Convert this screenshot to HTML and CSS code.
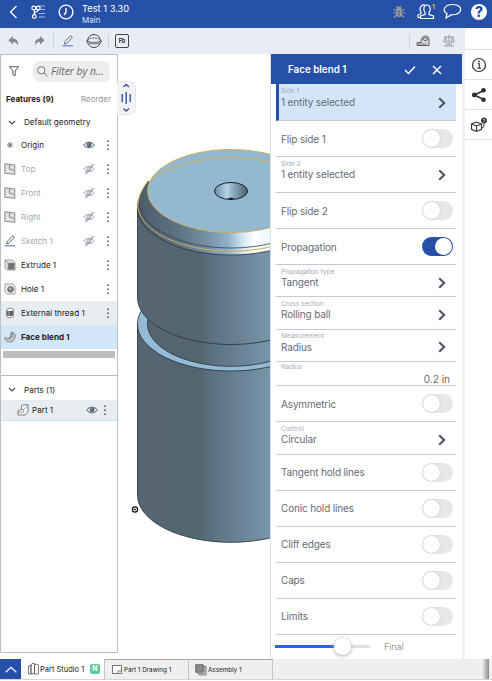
FILE: index.html
```html
<!DOCTYPE html>
<html lang="en">
<head>
<meta charset="utf-8">
<title>Test 1 3.30</title>
<link rel="stylesheet" href="styles.css">
</head>
<body>
<svg class="defs" width="0" height="0" aria-hidden="true">
  <symbol id="hidden-eye" viewBox="0 0 12 12"><path d="M.8 6C3 2.500 9 2.500 11.200 6 9 9.500 3 9.500.8 6zM2.200 11 9.800 1M3.400 11 11 1M4 6a2 2 0 0 1 4 0 2 2 0 0 1-4 0" fill="none" stroke="#8a96a5" stroke-width=".8"/></symbol>
  <symbol id="eye" viewBox="0 0 12 12"><path d="M.7 6C3 2.300 9 2.300 11.300 6 9 9.700 3 9.700.7 6z" fill="#e8ebef" stroke="#566274" stroke-width="1"/><circle cx="6" cy="5.700" r="2.400" fill="#4b586a"/><circle cx="5.200" cy="4.900" r=".7" fill="#fff"/></symbol>
  <symbol id="dots" viewBox="0 0 4 12"><path d="M1.200 1.500h1.500v1.500H1.200zM1.200 5.500h1.500v1.500H1.200zM1.200 9.500h1.500v1.500H1.200z" fill="#3d4958"/></symbol>
  <symbol id="plane" viewBox="0 0 12 12"><path d="M.8.8 10.800 2v9.300L.8 10.200z" fill="#e2e2e2" stroke="#808080" stroke-width=".9"/><path d="M5.500 1.500v5l5 .6" fill="none" stroke="#808080" stroke-width=".9"/></symbol>
  <symbol id="down" viewBox="0 0 8 5"><path d="m.8.8 3.200 3.200L7.200.8" fill="none" stroke="#444" stroke-width="1.100"/></symbol>
  <symbol id="next" viewBox="0 0 8 12"><path d="m1.200 1.200 5 4.800-5 4.800" fill="none" stroke="#4b5160" stroke-width="2"/></symbol>
  <symbol id="pencil" viewBox="0 0 12 12"><path d="m2.500 9 .6-2.500L8.700.8l1.700 1.400-5.500 6z" fill="#fff" stroke="#555" stroke-width=".9"/><path d="M.5 10.800h10.500" stroke="#4470c8"/></symbol>
</svg>

<header class="topbar">
  <svg class="i-back" width="9" height="14" viewBox="0 0 9 14"><path d="M7.500 1 1.500 7l6 6" fill="none" stroke="#fff" stroke-width="1.300"/></svg>
  <svg class="i-tree" width="15" height="14" viewBox="0 0 15 14" fill="none" stroke="#fff" stroke-width="1.200"><path d="M8 1h6M9.500 4.500H14M7.500 8.500H14M7.500 12H14" opacity=".6"/><circle cx="2.800" cy="3" r="1.900"/><circle cx="7.200" cy="3" r="1.900"/><circle cx="3.300" cy="11.500" r="1.800"/><path d="M3.300 9.700V5M7.200 5c0 2-3.900 1.500-3.900 4"/></svg>
  <svg class="i-clock" width="16" height="16" viewBox="0 0 16 16" fill="none" stroke="#fff" stroke-width="1.400"><circle cx="8" cy="8" r="6.900"/><path d="M8 4v4.500L6 11"/></svg>
  <div class="title"><div class="doc">Test 1 3.30</div><div class="branch">Main</div></div>
  <svg class="i-bug" width="14" height="14" viewBox="0 0 14 14"><path d="M4.500 4a2.500 2.500 0 0 1 5 0v6c0 3-5 3-5 0z" fill="#9b9b9b"/><path d="M1.500 4.500 5 6M12.500 4.500 9 6M1 8h12M2 12.500l3-3M12 12.500l-3-3M4.500 1 6 3M9.500 1 8 3" stroke="#9b9b9b" stroke-width="1.200"/><path d="M7 5v6.500" stroke="#264fa8" stroke-width=".8"/></svg>
  <svg class="i-people" width="19" height="17" viewBox="0 0 19 17" fill="none" stroke="#fff" stroke-width="1.200"><path d="M5 2.500c1-1.200 3-.6 3.500.5M4 9c-1.500-2-1.500-5 1-6.500M4 9v1.500L1 12v2.500h3"/><path d="M8 10C5.500 6.500 7 2 10 2s4.500 4.500 2 8v1.500l4.500 1.500v2.500h-13V13L8 11.500z" fill="#264fa8"/><text x="15" y="6" class="badge">1</text></svg>
  <svg class="i-chat" width="19" height="17" viewBox="0 0 19 17"><path d="M10 1.500c11 0 10 11-1.500 10.200L3 15l1-4.300C-2 7 2 1.500 10 1.500z" fill="none" stroke="#fff" stroke-width="1.200"/></svg>
  <span class="help">?</span>
</header>

<div class="workspace">
  <main class="stage">
    <div class="toolbar">
      <svg class="t-undo" width="11" height="10" viewBox="0 0 11 10"><path d="M5 0v2.500c4 0 5.500 3 5 7C9 7 7.500 6 5 6v2.500L.3 4.200z" fill="#858a92"/></svg>
      <svg class="t-redo" width="11" height="10" viewBox="0 0 11 10"><path d="M6 0v2.500C2 2.500.5 5.500 1 9.500 2 7 3.500 6 6 6v2.500l4.700-4.300z" fill="#858a92"/></svg>
      <i class="rule"></i>
      <svg class="t-pen" width="12" height="12"><use href="#pencil"/></svg>
      <svg class="t-ball" width="16" height="16" viewBox="0 0 16 16" fill="none" stroke="#444"><circle cx="8" cy="8" r="6.500"/><path d="M.8 7.500v1.500c3 2.500 11.400 2.500 14.400 0V7.500c-3 2.500-11.400 2.500-14.400 0z" fill="#e8ecf5" stroke-width=".8"/><path d="M2 6.500c3-2 9-2 12 0" stroke-dasharray="1.500 1"/></svg>
      <i class="rule two"></i>
      <span class="fb">Fb</span>
      <i class="rule three"></i>
      <svg class="t-tape" width="14" height="12" viewBox="0 0 14 12"><path d="M5 6.500 5.500 4c1-4 7.500-4 7.500 0v6.500H1v-3h4z" fill="#d8d8d8" stroke="#555" stroke-width=".9"/><ellipse cx="9.300" cy="4" rx="2.300" ry="1.500" fill="none" stroke="#555" stroke-width=".9"/><path d="M3 8v2M5 8v2M7 8v2M9 8v2" stroke="#555" stroke-width=".7"/></svg>
      <svg class="t-scale" width="12" height="12" viewBox="0 0 12 12" fill="none" stroke="#8b8e94" stroke-width=".9"><path d="M6 0v9M1 2h10M2.500 2 .8 7h3.400zM9.500 2 7.800 7h3.400zM1 11h10M3 9h6"/></svg>
    </div>

    <div class="canvas">
      <svg class="model" width="153" height="605" viewBox="118 54 153 605">
        <defs>
          <linearGradient id="side" gradientUnits="userSpaceOnUse" x1="137" y1="0" x2="271" y2="0"><stop offset="0" stop-color="#556672"/><stop offset=".46" stop-color="#536570"/><stop offset=".6" stop-color="#5f7585"/><stop offset=".8" stop-color="#6c8499"/><stop offset=".88" stop-color="#718ca1"/><stop offset="1" stop-color="#7896ab"/></linearGradient>
          <linearGradient id="bevel" gradientUnits="userSpaceOnUse" x1="137" y1="0" x2="271" y2="0"><stop offset="0" stop-color="#4c5d69"/><stop offset=".3" stop-color="#5d7180"/><stop offset=".52" stop-color="#7590a4"/><stop offset=".68" stop-color="#8fb1ca"/><stop offset=".8" stop-color="#d9ebf6"/><stop offset=".88" stop-color="#fff"/><stop offset="1" stop-color="#eaf6fc"/></linearGradient>
          <linearGradient id="cone"><stop offset="0" stop-color="#6f8da4"/><stop offset=".38" stop-color="#b5d3e8"/><stop offset=".52" stop-color="#94b5cc"/><stop offset="1" stop-color="#4c606e"/></linearGradient>
        </defs>
        <g stroke="#2a363e" stroke-width=".85">
          <path d="M137.500 324V495A93.500 47.300 0 0 0 324.500 495V324" fill="url(#side)"/>
          <ellipse cx="231" cy="324" rx="93.500" ry="47" fill="#95bad5"/>
          <ellipse cx="231" cy="324" rx="83.500" ry="42.300" fill="url(#side)"/>
          <path d="M137.500 208V297.500A93.500 47 0 0 0 324.500 297.500V208" fill="url(#side)"/>
          <path d="M137.500 208A93.500 47 0 0 0 324.500 208L320 195 148 182Q137.500 195 137.500 208" fill="url(#bevel)"/>
        </g>
        <path d="M148 182Q139 194 139 202A92 46 0 0 0 323 202" fill="none" stroke="#32424e" stroke-width=".8"/>
        <path d="M148.500 180Q137.800 195 137.800 206A93.300 46.700 0 0 0 324.300 206" fill="none" stroke="#cdae58" stroke-width="1"/>
        <ellipse cx="231" cy="191" rx="83.300" ry="41.600" fill="#95b8d1" stroke="#cdb05d" stroke-width="1"/>
        <path d="M149 182A93.500 47 0 0 1 313 182" fill="none" stroke="#cdb05d" stroke-width="1"/>
        <ellipse cx="231" cy="191" rx="16.500" ry="8.500" fill="url(#cone)" stroke="#17212a"/>
        <path d="M227.500 199q3.500-2.500 7 0z" fill="#111"/>
        <g fill="none" stroke="#111"><circle cx="135" cy="509.500" r="2.600" fill="#fff" stroke-width="1.200"/><circle cx="135" cy="509.500" r=".7" fill="#111" stroke-width=".6"/></g>
      </svg>

      <aside class="tree">
        <div class="filter">
          <svg width="10" height="11" viewBox="0 0 10 11"><path d="M.5.7h9L6.200 5v4.700L3.800 8.500V5z" fill="none" stroke="#444" stroke-width=".9"/></svg>
          <div class="search"><svg width="11" height="11" viewBox="0 0 11 11" fill="none" stroke="#666" stroke-width=".9"><circle cx="4.300" cy="4.300" r="3.700"/><path d="m7 7 3.500 3.500"/></svg><span>Filter by n...</span></div>
        </div>
        <div class="heading"><b>Features (9)</b><span>Reorder</span></div>
        <div class="group"><svg width="8" height="5"><use href="#down"/></svg><span>Default geometry</span></div>
        <div class="item"><svg class="glyph" viewBox="0 0 12 12"><circle cx="6" cy="6" r="2.200" fill="#fff" stroke="#555" stroke-width=".8"/><circle cx="6" cy="6" r=".9" fill="#333"/></svg><span>Origin</span><svg class="vis"><use href="#eye"/></svg><svg class="more"><use href="#dots"/></svg></div>
        <div class="item off"><svg class="glyph"><use href="#plane"/></svg><span>Top</span><svg class="vis"><use href="#hidden-eye"/></svg><svg class="more"><use href="#dots"/></svg></div>
        <div class="item off"><svg class="glyph"><use href="#plane"/></svg><span>Front</span><svg class="vis"><use href="#hidden-eye"/></svg><svg class="more"><use href="#dots"/></svg></div>
        <div class="item off"><svg class="glyph"><use href="#plane"/></svg><span>Right</span><svg class="vis"><use href="#hidden-eye"/></svg><svg class="more"><use href="#dots"/></svg></div>
        <div class="item off"><svg class="glyph"><use href="#pencil"/></svg><span>Sketch 1</span><svg class="vis"><use href="#hidden-eye"/></svg><svg class="more"><use href="#dots"/></svg></div>
        <div class="item"><svg class="glyph" viewBox="0 0 12 12"><path d="M1 1h7.500l2.500 2.500v7.500H3.500L1 9z" fill="#e8e8e8" stroke="#888" stroke-width=".8"/><path d="M4 4h6.500v6.500H4z" fill="#707070" stroke="#999" stroke-width=".8"/><path d="M1 1l3 3" stroke="#888" stroke-width=".8"/></svg><span>Extrude 1</span><svg class="more"><use href="#dots"/></svg></div>
        <div class="item"><svg class="glyph" viewBox="0 0 12 12"><path d="M1 1h8l2 2v8H3L1 9z" fill="#f2f2f2" stroke="#888" stroke-width=".8"/><circle cx="6.500" cy="6.300" r="2.900" fill="#858585" stroke="#555" stroke-width=".7"/><circle cx="6" cy="5.500" r="1" fill="#ccc"/></svg><span>Hole 1</span><svg class="more"><use href="#dots"/></svg></div>
        <div class="item hover"><svg class="glyph" viewBox="0 0 12 12"><path d="M2.500 2.300v7.400c1 1.500 6 1.500 7 0V2.300c-1-1.500-6-1.500-7 0z" fill="#fff" stroke="#777" stroke-width=".8"/><path d="M3 3.500c1.500.8 4.500.8 6 0v5c-1.500.8-4.500.8-6 0z" fill="#606060"/><path d="M5 4v4.800" stroke="#aaa"/></svg><span>External thread 1</span><svg class="more"><use href="#dots"/></svg></div>
        <div class="item active"><svg class="glyph" viewBox="0 0 12 12"><path d="M.7 6.800 4.500 7.500C7 6 6.500 3 7.500 1L11 3c.8 4.500-1.500 8-5.500 8-2 0-4-1-4.800-4.200z" fill="#c4c4c4" stroke="#777" stroke-width=".8"/><path d="M7.500 1c1.500 3 1 6-3 6.500" fill="none" stroke="#666" stroke-width=".8"/></svg><span>Face blend 1</span></div>
        <div class="rollback"></div>
        <div class="parts">
          <div class="group"><svg width="8" height="5"><use href="#down"/></svg><span>Parts (1)</span></div>
          <div class="item part"><svg class="glyph" viewBox="0 0 12 12"><path d="M4.500 1.500 6.500.7H11v7L8.500 11H1V6.500l3.500-1z" fill="#f3f3f3" stroke="#777" stroke-width=".9"/><path d="M4.500 5.500H6.500l2-2 2.500-2.500M6.500 5.500V8L1 8.500" fill="none" stroke="#888" stroke-width=".7"/></svg><span>Part 1</span><svg class="vis"><use href="#eye"/></svg><svg class="more"><use href="#dots"/></svg></div>
        </div>
      </aside>
      <div class="handle"><svg width="18" height="34" viewBox="0 0 18 34" fill="none" stroke="#2b56b4" stroke-width="1.400"><path d="m6.500 6 2.700-2.500L12 6M6.500 27.500l2.700 2.500 2.800-2.500M9.200 11v12M5.200 13v8M13.200 13v8"/></svg></div>

      <section class="dialog">
        <div class="dialog-head"><b>Face blend 1</b>
          <svg width="12" height="10" viewBox="0 0 12 10"><path d="m1 5 3.500 3.500L11 1.500" fill="none" stroke="#fff" stroke-width="1.500"/></svg>
          <svg width="10" height="10" viewBox="0 0 10 10"><path d="m1 1 8 8M9 1 1 9" stroke="#fff" stroke-width="1.500"/></svg>
        </div>
        <div class="fields">
          <div class="row pick selected"><small>Side 1</small><span>1 entity selected</span><svg class="next"><use href="#next"/></svg></div>
          <div class="row"><span>Flip side 1</span><i class="switch"></i></div>
          <div class="row pick"><small>Side 2</small><span>1 entity selected</span><svg class="next"><use href="#next"/></svg></div>
          <div class="row"><span>Flip side 2</span><i class="switch"></i></div>
          <div class="row"><span>Propagation</span><i class="switch on"></i></div>
          <div class="row pick short"><small>Propagation type</small><span>Tangent</span><svg class="next"><use href="#next"/></svg></div>
          <div class="row pick short"><small>Cross section</small><span>Rolling ball</span><svg class="next"><use href="#next"/></svg></div>
          <div class="row pick short"><small>Measurement</small><span>Radius</span><svg class="next"><use href="#next"/></svg></div>
          <div class="row value"><small>Radius</small><span>0.2 in</span></div>
          <div class="row"><span>Asymmetric</span><i class="switch"></i></div>
          <div class="row pick short"><small>Control</small><span>Circular</span><svg class="next"><use href="#next"/></svg></div>
          <div class="row"><span>Tangent hold lines</span><i class="switch"></i></div>
          <div class="row"><span>Conic hold lines</span><i class="switch"></i></div>
          <div class="row"><span>Cliff edges</span><i class="switch"></i></div>
          <div class="row"><span>Caps</span><i class="switch"></i></div>
          <div class="row"><span>Limits</span><i class="switch"></i></div>
        </div>
        <div class="final"><div class="slider"><i></i></div><span>Final</span></div>
      </section>
    </div>
  </main>
  <nav class="rail">
    <div class="cell first"></div>
    <div class="cell"><svg width="16" height="16" viewBox="0 0 16 16"><circle cx="8" cy="8" r="6.500" fill="none" stroke="#333" stroke-width="1.200"/><path d="M6.500 6.700H8.300V11M6.300 11.300h4" fill="none" stroke="#333" stroke-width="1.100"/><circle cx="8" cy="4.500" r=".9" fill="#333"/></svg></div>
    <div class="cell"><svg width="16" height="16" viewBox="0 0 16 16"><path d="M12.500 3.500 3.500 8l9 4.500" fill="none" stroke="#2d2d2d" stroke-width="1.500"/><g fill="#2d2d2d"><circle cx="12.500" cy="3.300" r="2.300"/><circle cx="3.300" cy="8" r="2.400"/><circle cx="12.500" cy="12.700" r="2.300"/></g></svg></div>
    <div class="cell"><svg width="16" height="16" viewBox="0 0 16 16"><path d="m5.500 5 5 2v5.300l-5 2.200-5-2.200V7zM.5 7l5 2 5-2M5.500 9v5.500" fill="none" stroke="#333" stroke-width="1.100"/><path d="M13 6v3.500l-2 1.500" fill="none" stroke="#333"/><circle cx="13" cy="3.500" r="2.900" fill="#333"/><path d="M12 3c.2-1.200 2-1 1.900.1L13 4.200v1" fill="none" stroke="#fff" stroke-width=".7"/></svg></div>
  </nav>
</div>

<footer class="tabs">
  <div class="up"><svg width="12" height="7" viewBox="0 0 12 7"><path d="m.7 6.300 5.300-5 5.300 5" fill="none" stroke="#fff" stroke-width="1.200"/></svg></div>
  <div class="tab current"><svg width="11" height="12" viewBox="0 0 11 12" fill="#fff" stroke="#555" stroke-width=".8"><path d="M.5 3 3 2v9H.5zM3 2l1-1.500h2.500V10L3 11zM6.500 2.500 8 1l2.500 1v9h-4z"/></svg><span>Part Studio 1</span><em>N</em></div>
  <div class="tab drawing"><svg width="10" height="9" viewBox="0 0 10 9"><path d="M.5.5h9v8h-9zM6 8.500v-2.500h3.500" fill="#fff" stroke="#666" stroke-width=".9"/></svg><span>Part 1 Drawing 1</span></div>
  <div class="tab assembly"><svg width="12" height="12" viewBox="0 0 12 12"><path d="M2.500 2.500H11V11H5L2.500 9z" fill="#eee" stroke="#666" stroke-width=".9"/><path d="M.7.7h7.500v7.500H.7z" fill="#8a8a8a" stroke="#555" stroke-width=".8"/><path d="M9.500 3v6.500H4" fill="none" stroke="#777" stroke-width=".8"/></svg><span>Assembly 1</span></div>
  <div class="shade"></div>
</footer>
</body>
</html>
```
FILE: styles.css
```css
* { box-sizing: border-box; }
body { margin: 0; width: 492px; height: 681px; overflow: hidden; background: #fff; font-family: Inter, "Liberation Sans", sans-serif; color: #222; display: flex; flex-direction: column; }
svg { display: block; flex: none; }
.defs { position: absolute; }

.topbar { height: 28px; flex: none; background: #264fa8; color: #fff; display: flex; align-items: flex-start; padding-left: 9px; }
.i-back { margin-top: 5px; }
.i-tree { margin: 5px 0 0 13px; }
.i-clock { margin: 4px 0 0 12px; }
.title { margin: 3px 0 0 8px; width: 310px; line-height: 11px; }
.doc { font-size: 9.300px; line-height: 12px; }
.branch { font-size: 8px; line-height: 10px; color: #dbe4f7; }
.i-bug { margin-top: 5px; }
.i-people { margin: 3px 0 0 11px; }
.i-chat { margin: 3px 0 0 7px; }
.badge { font-size: 6px; fill: #e1b64a; stroke: none; font-weight: 700; }
.help { margin: 4px 0 0 9px; width: 16px; height: 16px; border-radius: 8px; background: #fff; color: #264fa8; font-size: 14px; line-height: 16px; font-weight: 800; text-align: center; flex: none; }

.workspace { height: 631px; flex: none; display: flex; }
.stage { width: 465px; display: flex; flex-direction: column; border-right: 3px solid #f1f1f5; }
.toolbar { height: 26px; flex: none; width: 465px; margin-right: -3px; background: #e8ecf5; display: flex; align-items: center; padding-left: 8px; }
.t-redo { margin-left: 15px; }
.rule { width: 1px; height: 15px; background: #cbd2dd; margin-left: 8px; }
.t-pen { margin-left: 8px; }
.t-ball { margin-left: 12px; }
.rule.two { margin-left: 6px; }
.fb { margin-left: 6px; width: 14px; height: 14px; border: 1px solid #444; border-radius: 2px; font-size: 5.500px; font-weight: 700; line-height: 12px; text-align: center; }
.rule.three { margin-left: 280px; }
.t-tape { margin-left: 6px; }
.t-scale { margin-left: 13px; }

.canvas { flex: 1; position: relative; display: flex; justify-content: space-between; align-items: flex-start; }
.model { position: absolute; left: 118px; top: 0; }
.tree { width: 118px; height: 599px; border: 1px solid #bfbfbf; background: #fff; font-size: 8.100px; position: relative; }
.filter { display: flex; align-items: center; height: 31px; padding: 1px 7px 0 8px; gap: 14px; }
.search { flex: 1; display: flex; align-items: center; gap: 3px; height: 21px; border-radius: 7px; background: #ededed; padding-left: 4px; font: italic 10.400px "Open Sans", sans-serif; color: #666; white-space: nowrap; }
.heading { height: 25px; display: flex; justify-content: space-between; align-items: center; padding: 0 6px 0 5px; }
.heading span { color: #999; }
.group { height: 22px; display: flex; align-items: center; padding-left: 7px; gap: 8px; }
.item { height: 24px; display: flex; align-items: center; padding: 0 7px 0 3px; }
.item > span { margin-left: 5px; flex: 1; white-space: nowrap; }
.glyph { width: 12px; height: 12px; }
.vis { width: 12px; height: 12px; margin-right: 11px; }
.more { width: 4px; height: 12px; }
.off > span { color: #aaa; }
.hover { background: #e8edf2; }
.active { background: #d3e6f7; font-weight: 700; }
.rollback { height: 7px; margin: 2px 2px 17px; background: #bdbdbd; }
.parts { border-top: 1px solid #bbb; padding-top: 3px; }
.parts .group { height: 21px; }
.parts .item { height: 21px; padding: 0 10px 0 16px; background: #e8edf2; border-bottom: 1px solid #c9e1f5; }
.part > .vis { margin-right: 5px; }
.part > span { margin-left: 3px; }
.handle { position: absolute; left: 117px; top: 27px; width: 19px; height: 34px; background: #f3f3f4; border: 1px solid #e5e5e7; border-left: 0; border-radius: 0 7px 7px 0; }
.handle svg { margin-top: -1px; }

.dialog { width: 192px; height: 605px; position: relative; background: #fff; border-left: 1px solid #dce3ee; }
.dialog-head { height: 30px; background: #264fa8; color: #fff; display: flex; align-items: center; padding: 1px 20px 0 17px; font-size: 9.800px; }
.dialog-head b { flex: 1; font-weight: 600; }
.dialog-head svg + svg { margin-left: 16px; }
.fields { margin: 0 6px 0 5px; height: 550.500px; }
.row { height: 36px; border-bottom: 1px solid #c2cad4; padding: 0 4px 0 5px; display: flex; align-items: center; justify-content: space-between; font-size: 10px; letter-spacing: -.15px; color: #666b75; position: relative; }
.row > span { white-space: nowrap; }
.pick { display: grid; grid-template-columns: 1fr 8px; grid-template-rows: 12px 11px; align-items: center; align-content: start; padding-right: 10px; }
.pick small, .value small { grid-column: 1 / 3; font-size: 6.800px; letter-spacing: -.1px; line-height: 8px; padding-top: 1px; color: #a7afba; }
.pick > span, .pick > .next { grid-row: 2; line-height: 13px; }
.next { width: 8px; height: 12px; }
.selected { height: 37px; background: #d3e6f7; border-left: 3px solid #264fa8; padding-left: 2px; grid-template-rows: 13px 11px; }
.short { height: 32.300px; }
.value { height: 24.500px; align-items: flex-start; padding-right: 6px; }
.value span { align-self: flex-end; line-height: 11px; letter-spacing: 0; }
.switch { width: 31px; height: 19px; border-radius: 10px; background: #e7e7e7; display: flex; margin-right: -1px; padding: 1px; }
.switch::before { content: ""; width: 17px; height: 17px; border-radius: 50%; background: #fff; box-shadow: 0 0 2px #bbb; }
.switch.on { background: #264fa8; justify-content: flex-end; }
.switch.on::before { box-shadow: none; }
.final { display: flex; align-items: center; height: 23px; padding-left: 4px; font-size: 8.800px; color: #999; }
.slider { width: 95px; height: 3px; margin-right: 14px; background: linear-gradient(90deg, #2864e6 67px, #e1e1e1 67px); position: relative; }
.slider i { position: absolute; left: 59px; top: -7px; width: 17px; height: 17px; border-radius: 50%; background: #fff; box-shadow: 0 1px 4px #aaa; }

.rail { flex: 1; background: #fff; }
.cell { height: 30px; display: flex; align-items: center; padding-left: 6px; border-bottom: 1px solid #e0e0e0; }
.cell.first { height: 22px; }

.tabs { height: 21px; flex: none; display: flex; background: #efefef; font-size: 7.500px; border-bottom: 1px solid #d5d5d5; }
.up { width: 21px; background: #264fa8; display: flex; align-items: center; justify-content: center; }
.tab { display: flex; align-items: center; border-top: 1px solid #aaa; border-right: 1px solid #c4c4c4; white-space: nowrap; }
.current { width: 84px; background: #fff; border-top: 0; padding-left: 7px; gap: 1px; }
.current em { margin-left: auto; margin-right: 4px; width: 10px; height: 10px; border-radius: 2px; background: #5ec8a0; color: #fff; font: 700 7px/10px Inter, sans-serif; text-align: center; }
.drawing { width: 84px; padding-left: 7px; gap: 2px; font-size: 6.300px; }
.assembly { width: 84px; padding-left: 6px; gap: 1px; font-size: 6.300px; }
.shade { width: 7px; margin-left: auto; margin-right: 3px; background: linear-gradient(90deg, #efefef, #8a8a8a); }
```
